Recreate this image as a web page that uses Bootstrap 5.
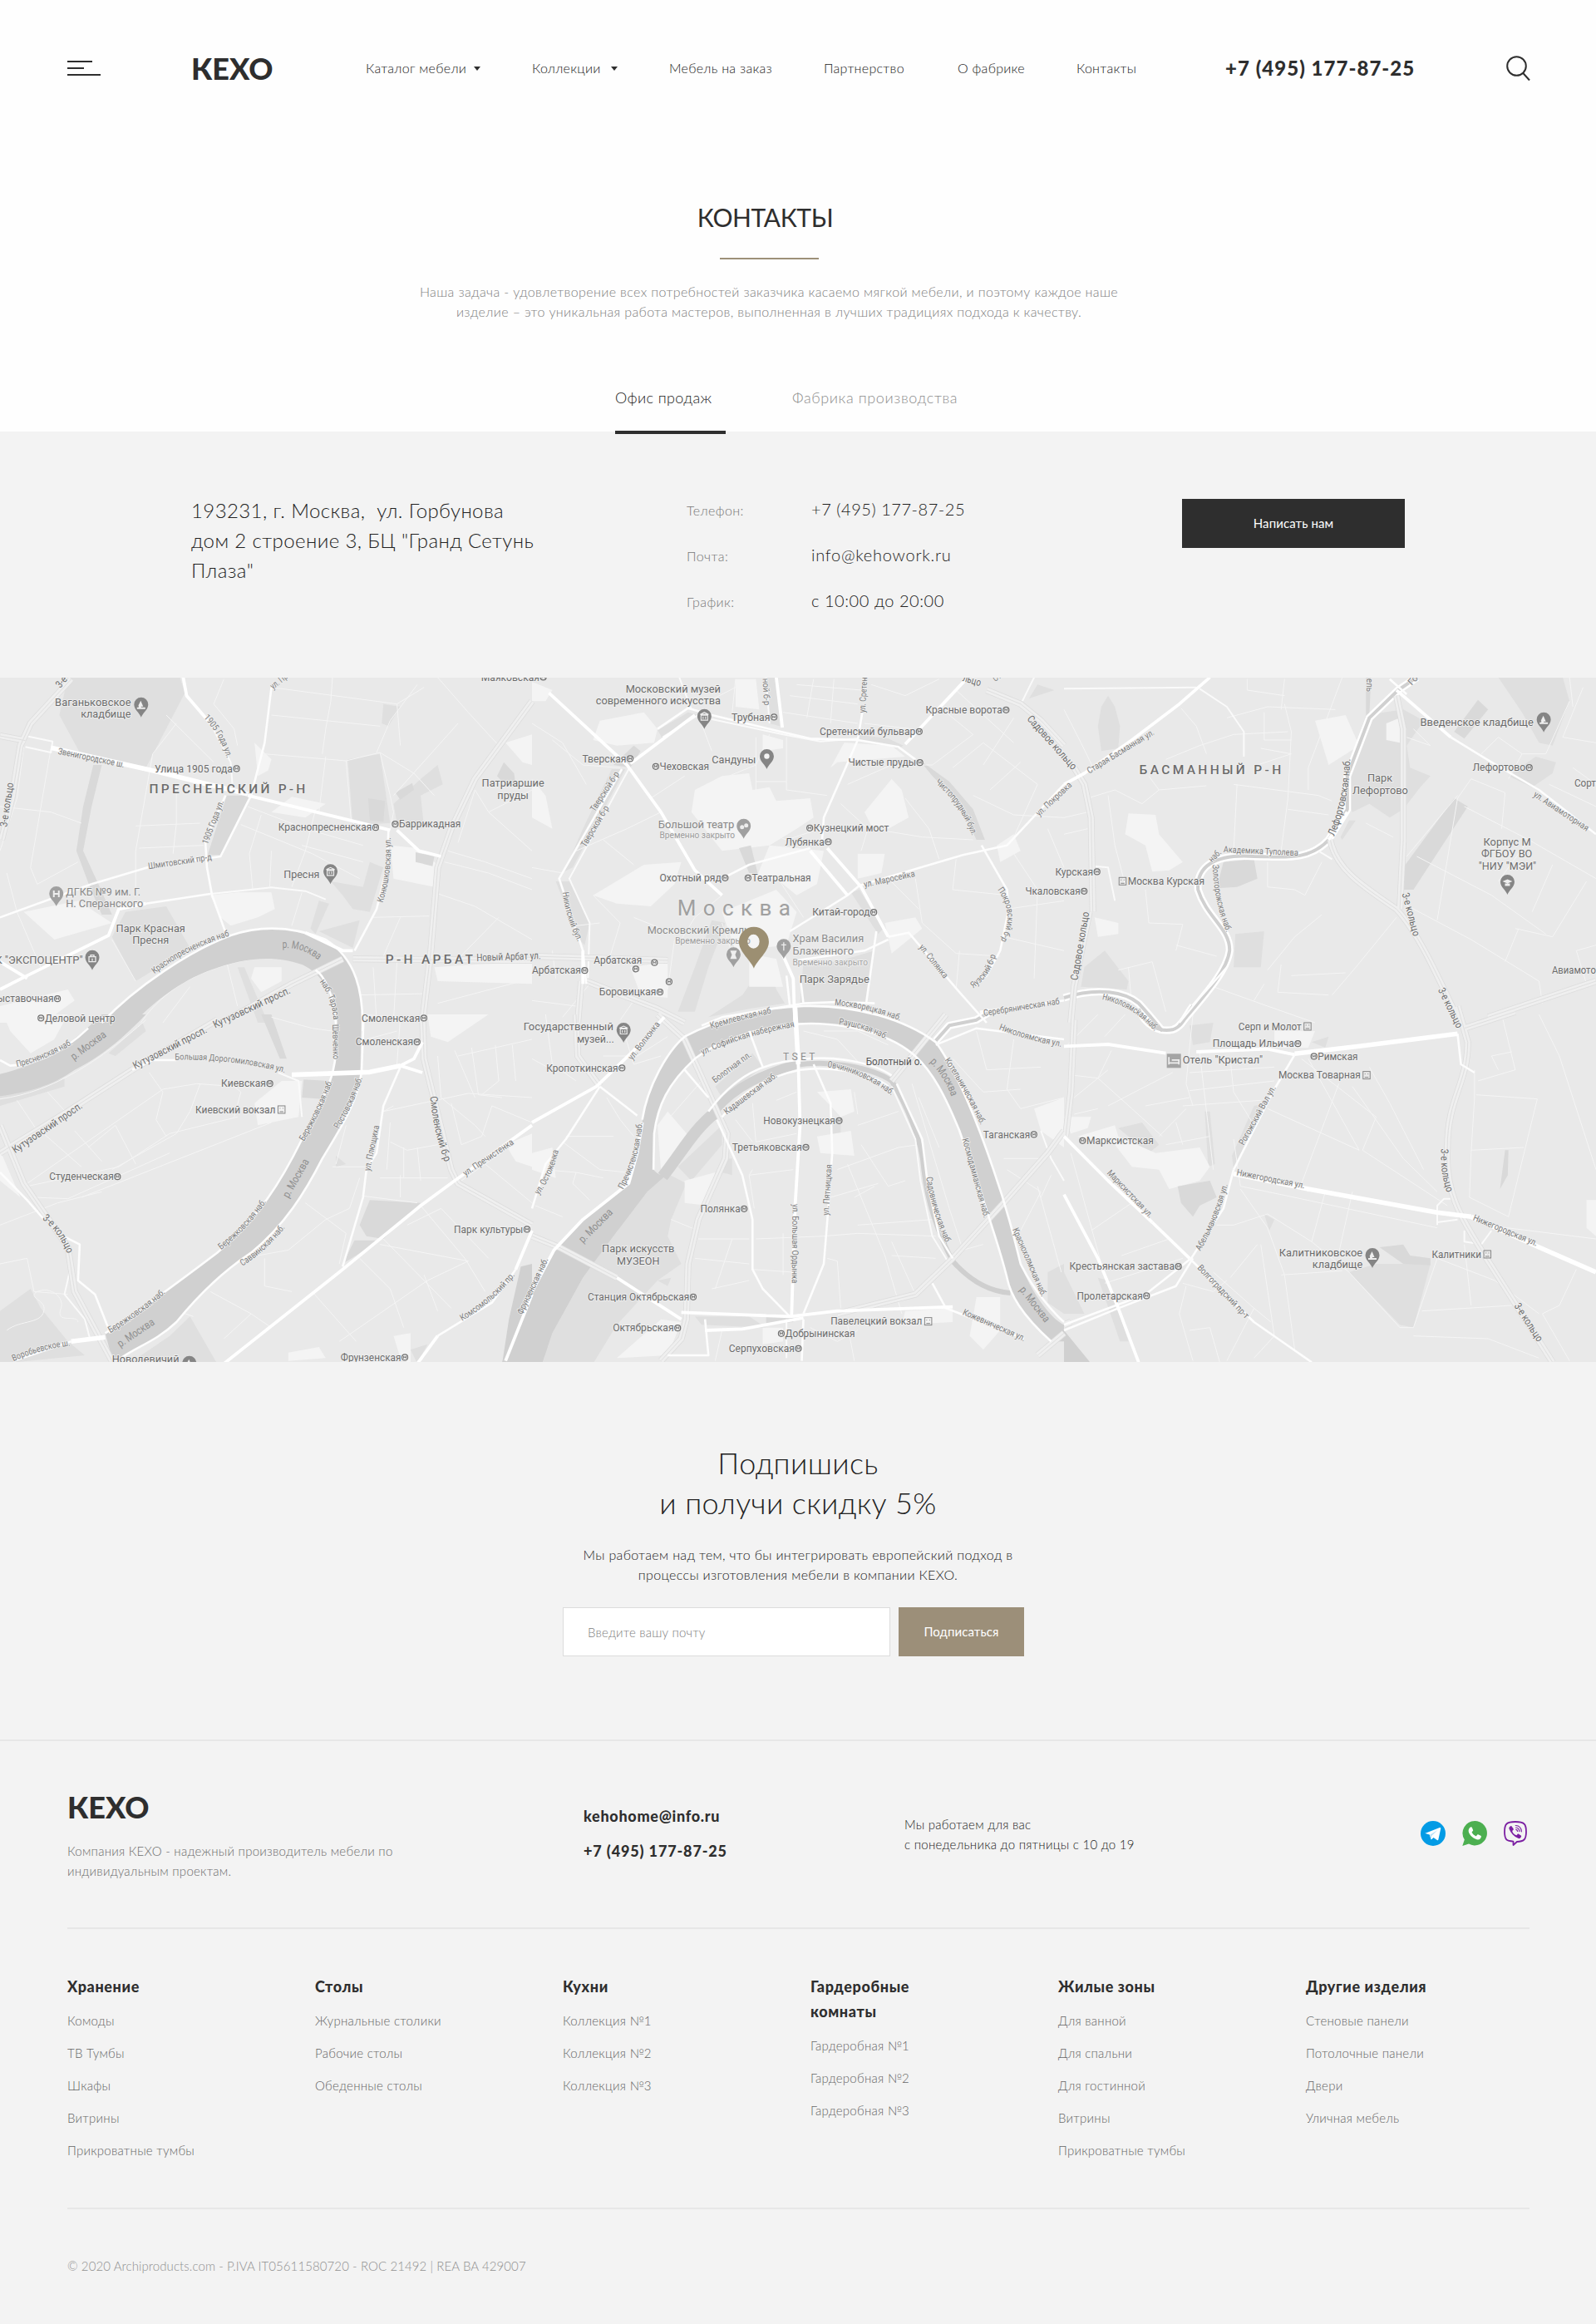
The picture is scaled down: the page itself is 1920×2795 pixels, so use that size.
<!DOCTYPE html>
<html lang="ru">
<head>
<meta charset="utf-8">
<meta name="viewport" content="width=device-width, initial-scale=1">
<title>Контакты — КЕХО</title>
<link href="https://cdn.jsdelivr.net/npm/bootstrap@5.3.0/dist/css/bootstrap.min.css" rel="stylesheet">
<style>
  body { font-family: Lato, "Open Sans", sans-serif; font-size: 16px; line-height: 24px; font-weight: 300; color: #222; background: #f3f3f3; }
  a { color: inherit; text-decoration: none; }
  h1, h2, h3, p, ul { margin: 0; }
  .top-area { background: #fefefe; }
  .site-head { height: 164px; padding-left: 81px; grid-template-columns: 150px 209px 200px 165px 186px 161px 143px 179px 338px 32px; letter-spacing: .28px; }
  .site-head > * { white-space: nowrap; }
  .brand { font-size: 36px; line-height: 48px; font-weight: 900; letter-spacing: -.1px; color: #2e2e2e; margin-left: -1px; }
  .burger { width: 40px; height: 18px; display: block; }
  .burger i { display: block; height: 2px; margin-bottom: 6px; background: #2e2e2e; width: 30px; }
  .burger i:nth-child(2) { width: 20px; }
  .burger i:nth-child(3) { width: 40px; margin: 0; }
  .tri { display: inline-block; border: 4.5px solid transparent; border-top: 5px solid #2e2e2e; border-bottom: 0; margin-left: 9px; vertical-align: 3px; }
  .tri-far { margin-left: 12px; }
  .head-phone { font-size: 24px; font-weight: 900; letter-spacing: 1.03px; color: #2e2e2e; }
  .page-title { font-size: 30px; line-height: 40px; padding-top: 77px; letter-spacing: -.4px; margin-right: 79px; color: #2e2e2e; }
  .gold-line { width: 119px; height: 2px; background: #9c9078; margin: 29px 0 27px 866px; }
  .intro { color: #808080; letter-spacing: .37px; width: 1850px; }
  .tabs-row { padding: 79px 0 0 740px; gap: 80px; font-size: 18px; letter-spacing: .38px; margin-bottom: -3px; position: relative; z-index: 1; }
  .tabs-row a { width: 133px; padding-bottom: 28px; border-bottom: 4px solid transparent; white-space: nowrap; color: #8e8e8e; }
  .tabs-row a.on { color: #222; border-color: #2e2e2e; }
  .tabs-row a + a { letter-spacing: .6px; }
  .office { height: 296px; padding: 77px 0 0 231px; grid-template-columns: 595px 596px 268px; background: #f3f3f3; }
  .address { font-size: 24px; line-height: 36px; letter-spacing: .4px; width: 440px; margin-left: -1px; }
  .line-row { height: 55px; line-height: 30px; padding-top: 1px; }
  .line-row dt { width: 150px; font-weight: 300; color: #777; letter-spacing: .42px; }
  .line-row dd { font-size: 20px; margin: 0; letter-spacing: .55px; }
  .line-row dd.mail { letter-spacing: .75px; }
  .btn-flat { border: 0; border-radius: 0; font-size: 15px; color: #fff; letter-spacing: .1px; height: 59px; padding: 0; }
  .btn-flat.ink { background: #2e2e2e; margin-top: 4px; }
  .btn-flat.sand { background: #9c8f79; width: 151px; }
  .city-map { display: block; width: 1920px; height: 823px; background: #e9e9e9; }
  .subscribe { padding-top: 97px; height: 456px; border-bottom: 2px solid #e7e7e7; }
  .subscribe h2 { font-size: 36px; line-height: 48px; font-weight: 300; letter-spacing: .35px; margin-bottom: 27px; }
  .subscribe p { letter-spacing: .34px; margin-bottom: 27px; }
  .subscribe form { gap: 10px; margin-left: 677px; }
  .mail-input { width: 394px; height: 59px; border: 1px solid #dcdcdc; border-radius: 0; font-size: 15px; font-weight: 300; padding: 0 29px; letter-spacing: .18px; }
  .mail-input::placeholder { color: #808080; }
  .site-foot { margin: 0 80px 0 81px; }
  .foot-top { height: 226px; padding-top: 55px; grid-template-columns: 621px 386px 621px 131px; border-bottom: 2px solid #e7e7e7; }
  .foot-top .brand { margin-left: 0; }
  .foot-top .about, .foot-list a, .hours { font-size: 15px; letter-spacing: .26px; }
  .foot-top .about { color: #6c6c6c; margin-top: 17px; }
  .direct { font-size: 18px; font-weight: 900; line-height: 30px; padding-top: 20px; letter-spacing: .7px; color: #2e2e2e; }
  .direct a { display: block; margin-bottom: 12px; }
  .direct a + a { letter-spacing: .87px; }
  .hours { padding-top: 33px; }
  .social { padding-top: 41px; gap: 20px; }
  .foot-cols { height: 337px; padding-top: 54px; grid-template-columns: repeat(6, 298px); border-bottom: 2px solid #e7e7e7; }
  .foot-cols h3 { font-size: 18px; line-height: 30px; font-weight: 900; letter-spacing: .62px; margin-bottom: 7px; color: #2e2e2e; }
  .foot-list a { color: #666; line-height: 39px; display: block; }
  .copy { color: #909090; font-size: 15px; padding: 56px 0 58px; letter-spacing: .09px; }
</style>
<script src="https://cdn.jsdelivr.net/npm/bootstrap@5.3.0/dist/js/bootstrap.bundle.min.js"></script>
</head>
<body>
<div class="top-area">
  <header class="site-head d-grid align-items-center">
    <a href="#" class="burger"><i></i><i></i><i></i></a>
    <a href="#" class="brand">КЕХО</a>
    <a href="#">Каталог мебели<span class="tri"></span></a>
    <a href="#">Коллекции<span class="tri tri-far"></span></a>
    <a href="#">Мебель на заказ</a>
    <a href="#">Партнерство</a>
    <a href="#">О фабрике</a>
    <a href="#">Контакты</a>
    <a href="#" class="head-phone">+7 (495) 177-87-25</a>
    <svg width="30" height="31" viewBox="0 0 30 31" fill="none" stroke="#2e2e2e" stroke-width="2"><circle cx="12.5" cy="12.5" r="11.3"/><path d="M20.3 21 28 29.5"/></svg>
  </header>
  <h1 class="page-title text-center fw-normal">КОНТАКТЫ</h1>
  <div class="gold-line"></div>
  <p class="intro text-center">Наша задача - удовлетворение всех потребностей заказчика касаемо мягкой мебели, и поэтому каждое наше<br>изделие – это уникальная работа мастеров, выполненная в лучших традициях подхода к качеству.</p>
  <nav class="tabs-row d-flex"><a href="#" class="on">Офис продаж</a><a href="#">Фабрика производства</a></nav>
</div>

<section class="office d-grid">
  <p class="address">193231, г. Москва,&nbsp; ул. Горбунова<br>дом 2 строение 3, БЦ "Гранд Сетунь<br>Плаза"</p>
  <dl class="m-0">
    <div class="line-row d-flex align-items-baseline"><dt>Телефон:</dt><dd>+7 (495) 177-87-25</dd></div>
    <div class="line-row d-flex align-items-baseline"><dt>Почта:</dt><dd class="mail">info@kehowork.ru</dd></div>
    <div class="line-row d-flex align-items-baseline"><dt>График:</dt><dd>с 10:00 до 20:00</dd></div>
  </dl>
  <button class="btn btn-flat ink">Написать нам</button>
</section>

<svg class="city-map" id="map" viewBox="0 815 1920 823" font-family="Roboto, sans-serif" font-weight="400"></svg>

<section class="subscribe">
  <h2 class="text-center">Подпишись<br>и получи скидку 5%</h2>
  <p class="text-center">Мы работаем над тем, что бы интегрировать европейский подход в<br>процессы изготовления мебели в компании КЕХО.</p>
  <form class="d-flex">
    <input class="form-control mail-input" placeholder="Введите вашу почту">
    <button type="button" class="btn btn-flat sand">Подписаться</button>
  </form>
</section>

<footer class="site-foot">
  <div class="foot-top d-grid">
    <div><a href="#" class="brand d-block">КЕХО</a><p class="about">Компания КЕХО - надежный производитель мебели по<br>индивидуальным проектам.</p></div>
    <div class="direct"><a href="#">kehohome@info.ru</a><a href="#">+7 (495) 177-87-25</a></div>
    <p class="hours">Мы работаем для вас<br>с понедельника до пятницы с 10 до 19</p>
    <div class="social d-flex align-items-start">
      <svg width="30" height="30" viewBox="0 0 30 30"><circle cx="15" cy="15" r="15" fill="#039be5"/><path fill="#fff" d="M5.8 14.7 22.9 8c.9-.3 1.5.2 1.3 1.3l-2.8 13c-.2 1-.8 1.2-1.6.8l-4.3-3.2-2.1 2c-.4.4-.8.5-1 .1l-.2-.8-1.400-4.600-4.900-1.500c-.7-.2-.7-.2-.1-.4z"/><path fill="#b9e1f7" d="m11.200 16.800 9.500-6-7.500 7.200-.6 4.200z"/></svg>
      <svg width="30" height="30" viewBox="0 0 30 30"><path fill="#4caf50" d="M15.300 0A14.700 14.700 0 1 1 8 27.500L.3 30l2.500-7.500A14.700 14.700 0 0 1 15.300 0z"/><path fill="#fff" d="M10.800 7.200c.5 0 .8.1 1.100.8l1.200 2.900c.2.5 0 .8-.3 1.200l-1 1.200c-.2.3-.2.5 0 .8 1 1.800 2.500 3.200 4.500 4.100.4.200.6.1.8-.1l1.200-1.500c.3-.4.600-.4 1-.3l3 1.500c.4.2.6.3.6.7 0 2.400-1.600 3.900-3.900 4-1.800 0-4.600-1.200-6.600-2.900-2.400-2-4.700-5.100-4.800-7.700 0-2 1.200-4.400 3.200-4.700z"/></svg>
      <svg width="28" height="30" viewBox="0 0 28 30" fill="none" stroke="#7b1fa2" stroke-width="1.800" stroke-linejoin="round" stroke-linecap="round"><path d="M14 1c5.500 0 8.800.8 10.500 2.500C26.300 5.200 27 8.200 27 13s-.7 7.800-2.500 9.500c-1.600 1.500-4.700 2.400-8.600 2.500L11.500 29v-4.300c-3.700-.4-6.600-1-8-2.200C1.700 20.800 1 17.800 1 13s.7-7.800 2.500-9.500C5.200 1.800 8.500 1 14 1z"/><path fill="#7b1fa2" stroke="none" d="M8.300 6.200c.5-.2.9-.2 1.300.3l2 2.800c.4.6.3 1.100-.2 1.600l-.8.700c-.4.4-.4.8-.2 1.200.8 2 2.200 3.500 4.200 4.300.5.200.8.100 1.100-.2l.8-1c.400-.5 1-.6 1.500-.2l2.700 1.900c.5.4.6.8.3 1.300-.7 1.400-1.900 2.700-3.200 2.100C12 18.400 8.400 14.500 6.500 9.400c-.5-1.400.6-2.600 1.800-3.200z"/><path stroke-width="1.200" d="M14.300 5.500c4.200.2 6.800 2.800 7 7.300M14.600 8c2.600.2 4.100 1.900 4.200 4.600M14.800 10.300c1.100.1 1.700.9 1.800 2.100"/></svg>
    </div>
  </div>
  <div class="foot-cols d-grid">
    <div class="foot-list"><h3>Хранение</h3><a href="#">Комоды</a><a href="#">ТВ Тумбы</a><a href="#">Шкафы</a><a href="#">Витрины</a><a href="#">Прикроватные тумбы</a></div>
    <div class="foot-list"><h3>Столы</h3><a href="#">Журнальные столики</a><a href="#">Рабочие столы</a><a href="#">Обеденные столы</a></div>
    <div class="foot-list"><h3>Кухни</h3><a href="#">Коллекция №1</a><a href="#">Коллекция №2</a><a href="#">Коллекция №3</a></div>
    <div class="foot-list"><h3>Гардеробные<br>комнаты</h3><a href="#">Гардеробная №1</a><a href="#">Гардеробная №2</a><a href="#">Гардеробная №3</a></div>
    <div class="foot-list"><h3>Жилые зоны</h3><a href="#">Для ванной</a><a href="#">Для спальни</a><a href="#">Для гостинной</a><a href="#">Витрины</a><a href="#">Прикроватные тумбы</a></div>
    <div class="foot-list"><h3>Другие изделия</h3><a href="#">Стеновые панели</a><a href="#">Потолочные панели</a><a href="#">Двери</a><a href="#">Уличная мебель</a></div>
  </div>
  <p class="copy">© 2020 Archiproducts.com - P.IVA IT05611580720 - ROC 21492 | REA BA 429007</p>
</footer>

<script>
// The map is split in a 3×2 grid of sheets; each sheet has its own 1568×1260 coordinate space.
const SX = 640 / 1568, SY = 1 / 3;
const ORIGIN = [[0, 810], [640, 810], [1280, 810], [0, 1220], [640, 1220], [1280, 1220]];
const px = (s, x) => ORIGIN[s][0] + x * SX, py = (s, y) => ORIGIN[s][1] + y * SY;

// p park, l built-up area, q pond, r river, c canal, 1–5 street width, h highway, y narrow river with banks
const SHEETS = [`
p 200,14 530,14 545,70 430,340 235,285 175,150
q 275,330 300,330 270,480 245,640 290,760 330,870 300,870 265,770 225,640 245,480
q 668,440 738,440 655,655 612,655
p 370,860 490,840 560,990 400,1110 330,950
p 1025,310 1120,290 1150,540 1040,545
q 1085,450 1135,460 1130,535 1090,530
q 1165,430 1215,395 1220,420 1180,455
q 1225,645 1280,660 1275,695 1225,680
p 1240,380 1290,330 1305,400 1240,440 1250,560 1170,540 1160,470
p 975,750 1070,770 1090,680 1130,700 1090,860 1040,850 1010,800
p 940,820 970,830 930,940 915,920
p 1130,110 1180,120 1145,190 1125,180
q 1485,320 1515,360 1520,400 1480,390 1465,370
p 700,1060 720,1060 790,1260 760,1260
p 940,930 1060,890 1040,990 990,960
l 1490,250 1568,220 1568,330 1540,320
l 620,800 700,790 800,790 810,850 760,880 680,910 650,880
l 1150,620 1230,630 1290,690 1280,770 1160,740
l 750,1060 830,1060 830,1110 770,1150 740,1100
l 1280,1060 1400,1050 1568,1040 1568,1120 1290,1110
l 0,1200 200,1140 220,1180 130,1260 0,1260
l 800,500 860,445 960,470 900,520
l 750,250 800,310 790,350 760,370
l 70,860 230,820 330,900 160,960
r M300,1260 C400,1130 560,1000 680,945 C800,895 900,930 960,960 C1050,1030 1072,1150 1068,1290 L990,1290 C985,1150 950,1085 890,1050 C800,1010 700,1030 600,1080 C520,1120 440,1200 395,1260Z
3 M300,1260 C400,1130 560,1000 680,945 C800,895 900,930 960,960 C1050,1030 1072,1150 1068,1290
3 M990,1260 C985,1150 950,1085 930,1070
1 M890,1040 C800,1010 700,1030 600,1080 C520,1120 460,1180 415,1260
h M0,225 L75,242
2 75,225 155,245 150,285 75,265
5 150,268 450,350 730,435
4 730,440 1000,520 1150,565
4 1170,565 1235,640 1300,660
4 540,14 550,80 620,180
2 620,180 680,320 685,400
3 800,50 780,250 740,440 650,660 435,700 270,760
3 270,760 0,880
3 665,440 605,600 610,700 625,800 665,935
4 0,1140 80,1090 320,945 350,850 430,830
3 430,830 620,795
4 0,1040 80,1100
2 620,795 800,772 900,785 960,815
3 1145,565 1140,700 1110,850 1045,1000
4 900,935 1010,1000 1040,1000
h 210,20 90,180 60,260 35,450 5,600
h 1568,100 1400,380 1330,560 1290,700 1270,1000 1245,1260
h 1010,1030 860,1120 640,1270
h 1040,1030 1568,1035
1 70,265 50,450 0,640
1 150,270 90,700 110,760 230,680
1 0,480 150,500 240,540
1 520,180 450,290 400,640 400,800
1 520,400 520,540 510,650
1 400,550 590,540
1 410,630 600,620
1 490,150 630,320
1 20,720 50,860 120,1060
1 660,20 630,110 690,200 700,260
1 980,14 975,100 960,200 950,290
1 800,150 1120,190
1 800,50 1170,110 1180,260
1 1230,40 1150,170 1110,285
1 780,290 1020,315 1120,285
1 1120,285 1150,440 1160,500 1150,565
1 1020,315 1035,530 1045,545
1 730,480 900,560 1070,620
1 710,545 920,650 1060,740
1 930,490 900,640 860,770
1 960,300 940,500
1 770,510 735,650 745,780
1 800,640 795,770
1 890,620 1070,680
1 1290,14 1380,140 1470,260
1 1170,110 1250,50
1 1120,285 1220,360 1280,440
1 1160,440 1350,180
1 1400,420 1440,500 1568,640
1 1400,420 1350,610
1 1320,640 1430,680 1568,740
1 1310,680 1440,720 1568,780
1 1440,500 1568,420
1 1095,880 1265,875
1 1280,790 1400,840 1568,960
1 1470,880 1350,1030
1 1180,880 1130,1020
1 1060,1160 1260,1155
1 1170,1040 1160,1250
1 1100,1060 1110,1250
1 890,790 860,910
1 330,960 400,1110
1 670,1050 700,1200
1 560,1130 480,1260
1 1568,1100 1290,1190`,
`
l 0,30 60,60 40,100 0,100
l 180,240 200,170 330,140 370,200 360,250 250,260
l 480,420 560,370 640,360 650,420 700,410 720,460 820,450 830,520 780,560 700,620 560,640 470,500
l 980,500 1060,380 1090,420 1110,520 1050,560 1000,550
l 700,620 860,640 840,760 780,800 720,740 660,740
l 180,800 330,690 440,680 420,760 350,840 250,830
l 290,1060 400,1040 400,1170 320,1160
l 560,860 720,780 780,860 750,980 600,1000
l 1040,900 1130,880 1150,920 1060,1010
l 960,650 1040,650 1030,720 960,740
l 1370,620 1420,580 1440,640 1380,680
l 600,20 660,20 670,130 600,120
l 880,340 920,250 1060,260 1100,300 900,320
l 0,380 40,440 60,560 0,520
l 680,220 740,240 740,270 680,280
p 370,205 460,140 490,150 385,235
q 240,330 300,260 320,280 290,340
p 235,345 275,345 120,700 95,715 150,560
p 955,220 1050,235 1095,260 1080,270 960,240
q 1140,310 1230,390 1300,490 1335,600 1310,600 1260,470 1180,370
q 610,630 645,620 665,720 640,720
p 940,790 965,780 1035,920 1020,940
p 690,14 725,14 730,190 700,180
p 430,1220 480,1060 530,890 570,900 520,1060 480,1220
p 520,1240 620,1160 660,1090 700,1060 720,1140 745,1190 640,1210
p 800,1040 900,1040 1010,1000 985,1185 790,1190
p 1465,90 1490,40 1540,60
p 70,750 110,750 170,900 155,980 140,960
l 640,1010 720,1030 740,1130 640,1130
4 50,70 280,330 380,500 480,710 560,800
3 265,345 80,740 150,1000 160,1120
2 285,345 110,740 170,900 165,1100
4 290,325 480,150
3 370,200 460,125 530,150 700,200 820,235 960,240 1080,265 1130,310
2 530,165 740,220 850,245 960,235
2 385,230 490,150
4 1130,300 C1240,400 1320,500 1335,600
3 1325,620 1400,780 1405,850 1380,1000 1340,1090 1300,1130
4 720,14 738,195
2 690,14 700,180
3 975,130 960,240 860,520 855,600
4 1280,20 1100,255
3 560,740 640,690 820,630
4 820,640 930,800
4 870,630 970,770 1050,950
3 760,930 930,800 965,765 1270,655 1400,620 1568,400
3 1050,950 1110,935 1260,1150 1340,1260
4 730,990 770,1100 775,1270
3 750,1090 760,1200
3 790,1090 800,1190
3 780,1035 980,1000 1050,960
3 1015,930 985,1190
h 0,1020 400,1035
h 145,1110 135,1260
h 160,1110 370,1210 450,1260
4 150,1000 150,1120
3 1320,1220 1568,1180
3 500,1270 560,1240 800,1190 900,1185 1010,1190
2 430,0 470,130
h 1340,60 1440,110 1500,170 1568,260
2 1480,14 1445,100
1 470,130 410,40
1 60,240 150,330 260,340
1 0,180 90,250 160,400
1 380,500 280,560 130,640
1 210,600 300,690
1 450,370 350,450
1 490,150 530,280
1 660,230 660,600
1 750,230 750,420 870,440
1 660,390 750,390
1 700,220 660,330 560,380
1 740,140 960,180
1 760,80 960,110
1 780,40 970,60
1 830,20 810,160
1 890,20 880,180
1 600,50 520,100
1 600,20 590,140
1 1000,40 1100,80 1200,20
1 980,180 1120,200
1 1200,120 1300,220 1180,330
1 1250,60 1420,250
1 1420,160 1330,330
1 1240,340 1330,250 1490,400
1 1350,420 1440,320
1 1300,440 1420,510 1568,520
1 1490,400 1420,590
1 1000,560 1150,590 1300,600
1 1100,450 1170,560 1200,670
1 930,400 1060,330 1180,330
1 910,470 990,560 970,640
1 1130,740 1150,900 1250,1010 1380,1020
1 1250,670 1240,780 1400,800
1 1050,740 1140,850
1 1400,850 1568,820
1 1390,950 1568,1000
1 1260,1000 1250,1140
1 1420,650 1490,780 1480,1100
1 1520,560 1568,700
1 0,700 90,720
1 180,800 260,900 230,1020
1 60,1000 70,1100
1 200,900 130,910
1 440,960 480,880 560,800
1 420,960 400,1140
1 300,880 420,940
1 560,900 600,1050
1 600,870 640,960
1 720,730 800,880
1 170,1120 90,1240
1 0,1180 130,1200
1 300,1180 260,1250
1 850,560 750,600 660,560`,
`
l 190,505 270,510 280,580 350,680 310,710 260,715 240,620 180,580
l 90,880 160,900 160,940 100,950
l 740,170 830,150 870,260 780,330
p 110,120 130,80 150,120 165,190 160,270 110,280 100,190
p 890,150 1000,130 1060,170 1010,260 1020,340 1080,370 1050,410 1000,490 960,520 900,470 850,500 820,420 850,290
l 950,180 990,160 990,250 950,240
q 890,14 905,14 900,150 890,150
q 1220,95 1250,130 1180,235 1150,210
p 1280,14 1470,14 1490,100 1440,260 1400,250 1350,140
q 1150,450 1190,480 1030,780 1000,780 1000,700
p 1310,370 1390,300 1450,320 1440,360 1380,410
q 470,680 560,670 570,740 510,770 450,775
p 505,940 590,930 580,1060 500,1060
p 60,1060 120,1000 190,1110 185,1140 50,1130
p 860,530 820,600 815,590 840,530
y M1040,14 L985,60 L900,160 L835,370 L835,490 L780,600 C720,680 640,660 560,660 C440,650 390,700 395,780 C420,880 490,920 488,1000 C480,1080 400,1180 340,1270
y M0,1170 C100,1130 180,1150 220,1190 C250,1230 270,1260 290,1290
4 0,400 60,360 200,240 340,110 430,14
2 0,55 390,50
2 400,55 480,120 530,210 530,300
h 30,340 60,400 80,520 85,860
h 75,860 30,1130 20,1260
4 980,60 1140,230
3 1140,230 1260,320 1400,420 1568,580
3 960,20 1010,75
h M785,600 C800,700 870,760 980,850 C1040,930 1090,1060 1170,1270
h 980,80 1000,200 1000,600 990,850
h 1568,1110 1250,1240
4 835,500 780,600
2 90,695 130,700 150,820
3 340,1260 400,1170 480,1060
2 750,640 790,670
1 0,130 50,250 90,350
1 70,450 150,420 230,470 280,420 420,405
1 250,370 280,420
1 500,400 750,440 790,460
1 510,400 500,640
1 480,160 600,120 800,130
1 345,125 390,190 420,290
1 300,310 400,260 500,220 660,210
1 590,140 590,240 670,240
1 580,270 670,290 570,330
1 650,110 670,210 660,450 640,640
1 650,20 640,130
1 540,20 540,60 650,80
1 820,14 720,340 720,420
1 660,490 780,510
1 130,440 150,620 180,760
1 600,680 600,770 680,780 710,800 760,680
1 330,770 400,760
1 240,780 250,900 350,905 330,1000
1 330,980 450,1020
1 600,1070 680,950 760,870
1 980,880 860,1060 790,1160
1 640,1050 630,1150 780,1160
1 670,1090 830,1080
1 160,1070 260,1040 300,1220
1 190,1060 200,1200
1 440,1130 600,1200 740,1260
1 560,1180 590,1120
1 1010,660 1160,440
1 1200,380 1160,450 1100,890
1 1040,660 1260,800 1420,940
1 1180,480 1370,600 1568,740
1 1200,380 1300,430 1290,560
1 1000,830 1200,960 1400,1110
1 1370,600 1280,750
1 1440,690 1380,860
1 1540,750 1440,950 1330,920
1 1340,920 1300,1040
1 1400,1110 1410,1190
1 1568,980 1510,1000 1540,1120
1 1430,400 1568,480
1 1490,100 1420,290 1350,290
1 1230,290 1280,230 1350,290 1310,380
1 1490,14 1500,120
1 1530,50 1470,230 1568,250
1 1010,230 1080,260 1030,200
1 1500,340 1568,400
1 890,540 970,590
1 0,520 70,500
1 0,580 70,560`,
`
q 895,235 970,240 950,305 890,300
p 320,140 420,30 430,60 340,150
q 770,0 800,0 845,160 825,160
q 1090,670 1240,680 1130,810 1080,800 1060,760
q 1045,815 1120,815 1010,900
p 0,1070 90,990 120,1060 200,1180 250,1230 0,1260
p 560,1090 640,1260 380,1260 500,1160
p 0,290 190,230 190,260 0,330
p 990,510 1020,540 990,550
p 1210,1210 1260,1190 1230,1260
l 750,320 830,240 890,240 880,370 760,400
l 10,0 200,0 160,90 90,140 30,60
l 1260,0 1440,0 1320,100 1270,80
l 1160,1160 1210,1150 1210,1260 1180,1240
l 0,490 60,660 0,600
l 850,1220 940,1200 960,1240 850,1250
l 1490,470 1568,430 1568,550 1520,530
r M0,215 C120,180 200,120 300,0 L430,0 C360,90 300,150 220,200 C150,260 80,280 0,295Z
r M990,0 L1065,0 L1062,200 C1060,300 1010,400 950,520 C900,640 840,760 740,860 C640,940 560,1050 520,1110 C460,1180 400,1200 360,1240 L330,1240 310,1150 C400,1080 500,990 640,860 C760,740 830,600 890,450 C940,330 995,230 990,100Z
r 1568,900 1535,910 1500,1100 1480,1260 1568,1260
3 M0,165 L30,185 C120,180 200,120 260,50
1 M0,305 C160,280 300,160 430,20
3 M990,0 L990,100 C995,230 940,330 890,450 C830,600 760,740 640,860 C500,990 400,1080 310,1150
3 M1072,0 L1066,200 C1060,300 1010,400 950,520 C900,640 840,760 740,860 C640,940 560,1050 520,1110 C460,1180 400,1200 350,1245
3 390,200 450,165 520,165
5 860,218 1090,208 1180,185
4 1180,185 1220,160 1245,100
4 1180,185 1245,210
2 820,210 880,240 890,370
h 0,500 200,350 390,200 640,20
h 0,400 70,610 200,840 220,1000 330,1250
3 170,790 235,830 230,960 280,1010 325,1150
3 0,570 80,670 130,740
2 205,930 190,1010 250,1100 265,1170
5 210,1180 310,1165
3 40,1250 210,1180
1 M20,1140 C60,1100 130,1120 130,1060 C130,1030 80,1020 110,1000 C150,980 190,1020 180,1060 C160,1120 230,1080 230,1110
3 1180,190 1130,330 1110,500 1080,560 1070,660 1010,910
4 1568,400 1340,600 1240,690 1000,930 660,1260
h 1245,0 1250,160 1330,560 1350,610 1568,760
4 1568,780 1520,920
3 1520,920 1450,1040 1290,1160
4 1290,1160 1230,1260
4 1568,1010 1490,1250
1 440,210 480,280 460,380 490,440
1 480,270 580,250 690,260 710,280 690,370
1 590,250 560,350 520,430 330,560
1 700,370 500,430 350,550 80,620
1 80,610 480,270
1 50,310 110,420
1 110,410 240,550
1 220,420 300,530
1 260,480 340,400 400,540
1 140,280 200,360
1 100,660 200,665 500,500
1 240,660 800,390
1 1130,350 1380,285 1568,300
1 1130,350 1160,330
1 1150,460 1200,490 1290,470
1 1150,390 1140,560
1 1190,480 1190,590
1 1230,480 1240,600
1 1120,590 1320,590
1 1070,655 1230,680
1 1180,580 1180,660
1 1290,150 1300,300 1400,400 1430,440
1 1340,130 1400,300
1 1390,120 1410,290 1480,300
1 1460,110 1470,240 1420,290
1 1350,150 1568,90
1 1330,320 1360,470 1420,440 1450,330 1568,390
1 1510,110 1520,240
1 1360,600 1500,480
1 1430,540 1568,680
1 1060,0 1180,10 1170,180
1 1080,90 1170,60
1 1240,690 1370,880 1430,1000
1 1130,810 1330,1060
1 1120,830 1380,890 1260,960 1000,1180
1 1200,760 1300,700 1440,880
1 1060,880 1150,990 1190,1130
1 920,1000 1050,1180
1 1250,940 1290,1070
1 620,1000 740,1080 800,1130
1 740,1080 660,1170
1 900,680 1020,790 1000,900
1 960,740 850,850 760,870
1 1060,590 1030,700 960,740
1 980,550 1080,550
1 1020,400 990,540
1 780,880 780,980 860,1000
1 570,1090 500,1060
1 0,900 80,880 100,1000 200,1010
1 800,10 920,50 980,60
1 0,760 170,680 300,640`,
`
p 400,575 455,610 410,740 400,800 440,900 370,960 250,1120 180,1260 30,1260 60,1150 150,950 240,800 340,640
p 540,260 650,140 680,190 560,300
p 370,960 410,950 400,980
q 690,1080 770,1090 770,1110 690,1120
p 480,1090 640,1090 690,1130 500,1120
p 560,520 590,520 590,580 560,570
p 430,550 560,400 560,470 470,600
p 880,380 910,380 910,480 890,480
p 1520,930 1568,900 1568,1080 1520,1040
p 20,1200 60,1200 60,1260
l 370,400 400,350 470,450 430,540 380,560
l 450,600 540,570 520,690 450,680
l 840,280 940,270 950,350 910,370 880,330
l 840,440 940,420 950,510 850,500
l 1310,1020 1380,1020 1380,1140 1330,1210 1290,1160
l 1100,1070 1240,1060 1240,1110 1090,1120
l 380,1100 440,1110 400,1230 250,1240
l 1480,340 1568,300 1568,480 1500,420
l 0,500 60,480 70,590 0,560
l 680,1130 740,1130 740,1180 680,1190
r M325,390 C340,260 400,130 450,80 C560,10 680,-25 800,-30 C 960,-35 1100,20 1190,100 C1250,200 1310,380 1360,560 C1400,700 1420,800 1440,900 C1470,1000 1530,1100 1568,1120 L1568,1180 L1530,1180 C1440,1080 1410,1010 1400,950 C1370,800 1310,600 1260,420 C1220,300 1180,200 1120,140 C1040,60 900,25 780,35 C650,50 540,100 480,160 C400,250 370,330 360,430 L358,560 Q380,590 400,575 L340,640 240,800 150,950 60,1150 30,1260 -90,1260 -50,1150 0,1000 65,850 150,740 285,610 310,500Z
c M385,585 C440,500 480,410 540,355
C M540,345 C600,260 680,215 780,180
d M780,182 C880,165 1000,190 1060,240 C1100,320 1150,450 1155,560 C1165,680 1200,800 1240,890 C1290,960 1350,1000 1410,1005
3 M325,380 C340,260 400,130 450,80 C560,10 680,-25 800,-30 C 960,-35 1100,20 1190,100 C1250,200 1310,380 1360,560 C1400,700 1420,800 1440,900 C1480,1000 1540,1080 1568,1110
3 M1530,1180 C1440,1080 1410,1010 1400,950 C1370,800 1310,600 1260,420 C1220,300 1180,200 1120,140 C1040,60 900,25 780,35 C650,50 540,100 480,160 C400,250 370,330 360,430 L358,560
4 325,390 310,500 285,610 150,740 65,850 0,1000
3 M520,350 C600,220 680,175 780,165 C880,145 1000,170 1060,220
3 M560,370 C620,280 690,225 790,200 C880,185 1000,210 1050,260
5 775,-30 785,180
4 785,180 790,400 775,700 765,1090
3 830,180 880,320 885,500 870,750 860,900 800,1080
3 545,380 620,580 650,740 650,920 680,990 760,1090
3 640,60 680,190
h 370,0 450,90 520,280 575,430 570,520 490,740 460,900 455,1100 440,1170 380,1250
3 450,200 520,300
4 0,390 190,260 300,130 390,10
3 200,260 100,450 40,540 0,700
h 130,0 135,150 200,260
3 200,260 310,365
h 0,800 80,840 250,950
4 250,950 440,1100
4 440,1075 760,1090 900,1070 1240,1055
4 510,1140 620,1135 800,1095
3 400,1230 520,1230 510,1100
2 750,1100 750,1240
3 800,1100 795,1250
h 1220,0 1120,150 1060,240
h 1568,420 1520,500 1390,680 1240,880 1130,1010 900,1080
3 1075,250 1150,450 1165,600 1200,800 1240,880
2 1060,260 1130,450 1145,600 1180,800 1230,900
y 1190,95 1230,40 1310,20 1350,-10
3 1190,110 1310,50 1568,90
3 1180,970 1220,1060 1450,1170
h 1490,1230 1568,1150
2 1500,420 1530,520 1568,600
1 650,560 640,580 655,700
1 640,580 770,560
1 650,320 660,460 780,430
1 720,310 780,280
1 600,380 650,460
1 930,540 1040,870 1090,1080
1 900,560 1080,480 1140,470
1 880,660 1020,610
1 960,760 1180,740
1 950,660 1010,620
1 870,880 900,890 910,1060
1 490,810 640,810
1 660,810 860,800 960,790 1190,800
1 740,790 740,940
1 590,810 540,990
1 480,880 640,900
1 530,990 640,960
1 410,740 490,780
1 650,920 770,930
1 1060,820 1130,1010
1 960,400 1080,350
1 970,470 1050,620 1100,600
1 950,280 960,360
1 1120,250 1230,700 1270,850
1 1270,850 1330,830
1 1140,300 1200,480
1 1200,940 1240,880
1 800,60 900,90 960,170
1 860,60 960,60 1050,110
1 40,0 60,180 130,240
1 0,160 60,200
1 210,150 310,150 400,80
1 270,60 300,180 380,150
1 100,440 240,440
1 90,460 200,560 280,570
1 30,560 130,570 210,590
1 130,570 120,610 170,670
1 220,300 260,380 300,440
1 10,690 90,730
1 500,240 400,380
1 820,1130 900,1180 960,1140
1 560,1140 540,1250
1 930,1120 950,1250
1 1190,880 1060,870
1 1240,160 1330,280 1440,270
1 1310,60 1340,200 1500,190
1 1420,90 1400,270 1440,340 1568,300
1 1360,430 1480,440
1 1400,560 1500,640 1440,780
1 1390,520 1500,520
1 1490,620 1560,930
1 1530,580 1500,660`,
`
p 370,40 440,30 430,100 380,110
p 160,410 230,390 280,470 250,500
q 335,620 430,600 450,660 400,690 380,730 345,680
q 930,840 1000,830 1020,870 1080,880 1080,905 1000,900
p 840,930 920,900 1080,900 1030,1130 990,1120
p 0,930 60,1080 0,1080
q 1300,490 1310,490 1308,580 1285,630
p 560,330 600,320 500,560 495,510
p 415,350 430,350 445,540 425,550
p 590,720 620,740 605,780
p 100,950 130,960 190,1180 165,1180
p 730,100 780,80 770,120
r 0,1140 80,1260 0,1260
l 0,370 80,370 70,410 20,430
l 40,440 150,400 160,440 270,500 400,480 430,550 400,600 310,630 280,560 200,550 150,470
l 1540,670 1568,670 1568,800 1540,770
l 620,60 740,60 720,120 620,120
y M220,-20 C240,40 280,65 320,55 C350,45 360,0 380,-30
4 0,115 130,108 300,140
4 390,135 600,125 680,145
5 680,142 870,115 1160,70
h 30,20 20,280 5,440
4 0,440 130,600 260,750
4 260,750 370,880
3 370,880 560,1110 730,1255
3 680,145 620,270 500,560
3 500,560 470,700 375,880 240,1010 0,1120
3 0,1140 160,1060 330,980 380,880
5 500,575 720,630 1100,715 1200,730
5 1200,730 1400,840 1568,930
h M1160,-30 L1190,100 C1190,250 1130,300 1130,480 C1120,650 1180,750 1240,870 L1440,1255
3 1160,70 1170,180 1210,210
4 0,650 100,880 160,1060 220,1255
h 1180,50 1330,-10
h 0,1120 20,1110
2 1100,760 1100,690 1120,665 1140,665
2 1100,750 1160,740
2 1180,780 1180,820 1230,830 1260,780
1 1210,200 1210,300 1200,500 1195,660 1310,730
1 1215,290 1395,305 1310,730
1 1200,490 1355,480
1 1290,0 1330,200 1220,240
1 1260,150 1280,200
1 1260,150 1320,135
1 700,160 920,370 880,490 1130,690
1 720,160 870,490
1 600,340 870,490
1 810,250 700,610
1 500,450 520,620 640,650 1100,770
1 520,630 600,770 650,940 680,1210
1 730,820 840,930 990,1130 1030,1130 1100,880
1 600,720 730,820 770,640
1 850,640 810,860
1 600,720 500,760 450,760
1 440,930 560,1060 610,1110
1 570,830 490,950
1 580,830 620,1160 560,1240
1 350,880 120,970
1 20,500 110,900 160,910
1 80,780 200,680
1 170,870 310,810
1 100,0 10,110
1 30,220 100,230 200,340 290,440
1 100,230 140,130
1 130,330 240,260 320,210
1 370,210 620,190
1 370,275 620,240
1 350,330 580,310
1 380,0 370,120 360,250 380,330
1 400,140 440,560
1 490,160 500,280 560,400
1 300,470 430,440
1 330,390 350,470
1 240,330 370,300
1 280,440 360,340
1 180,0 120,80
1 30,300 130,200
1 350,970 440,1000 480,960
1 360,980 340,1080 380,1250
1 370,1140 430,1130 460,1260
1 640,940 820,925
1 1100,880 1270,960 1400,1080
1 1055,1070 1320,1050
1 1180,830 1200,1050
1 1510,920 1460,1050 1410,1080 1490,1250
1 900,190 960,320 1060,560
1 1030,1160 1250,1170 1400,1240
1 850,260 1000,520 1100,640
1 1240,760 1568,810
1 1400,0 1460,150 1568,560
1 480,1250 560,1060
1 700,620 720,640
1 30,360 100,340`];

const LOOK = {
  p: ['#dfdfdf'], q: ['#d9d9d9'], l: ['#f4f4f4'], r: ['#d0d0d0'],
  c: ['none', '#d0d0d0', 14], C: ['none', '#d0d0d0', 11], d: ['none', '#cfcfcf', 6],
  1: ['none', '#f5f5f5', 1], 2: ['none', '#fafafa', 2], 3: ['none', '#fdfdfd', 2.6], 4: ['none', '#fff', 3.8], 5: ['none', '#fff', 5.6],
  y: ['none', '#fff', 9], Y: ['none', '#d0d0d0', 4], h: ['none', '#dcdcdc', 8], H: ['none', '#efefef', 6.5], I: ['none', '#dfdfdf', 1]
};
const parsed = [];
SHEETS.forEach((txt, s) => txt.trim().split('\n').forEach(row => {
  const kind = row[0], d = row.slice(2).trim();
  const closed = 'pqlr'.includes(kind);
  parsed.push([s, kind, d[0] === 'M' ? d : 'M' + d.replace(/ /g, 'L') + (closed ? 'Z' : '')]);
}));
let out = '';
for (const layer of 'plq1rcCdyY2hHI345') {
  const source = { Y: 'y', H: 'h', I: 'h' }[layer] || layer;
  const [fill, stroke, w] = LOOK[layer];
  for (const [s, k, d] of parsed) if (k === source)
    out += `<path transform="translate(${ORIGIN[s]}) scale(${SX} ${SY})" d="${d}" fill="${fill}"` +
      (stroke ? ` stroke="${stroke}" stroke-width="${w}" vector-effect="non-scaling-stroke" stroke-linejoin="round"` : '') + '/>';
}

// Street names: sheet, start x,y, end x,y, name, bow (px), size, colour
const STREETS = [
  [0,170,290,365,340,'Звенигородское ш.'],[0,600,160,668,308,'1905 Года ул.',4],[0,612,618,660,462,'1905 Года ул.'],
  [0,438,706,625,672,'Шмитовский пр-д'],[0,1128,828,1150,590,'Конюшковская ул.',-4],[0,455,1084,678,948,'Краснопресненская наб',5],
  [0,832,990,940,1038,'р. Москва',5,13,'#8f8f8f'],[0,20,555,40,395,'3-е кольцо',0,12.5],[0,178,54,200,22,'3-е',0,12.5],[0,805,58,850,14,'ул. Пр'],
  [0,634,1280,858,1152,'Кутузовский просп.',0,12.5],[0,942,1112,982,1252,'наб. Тараса',4],[0,1405,1038,1594,1030,'Новый Арбат ул.',0,12.5],
  [1,185,500,258,362,'Тверской б-р'],[1,158,628,228,484,'Тверской б-р'],[1,90,790,136,968,'Никитский бул.',-3],
  [1,982,142,988,14,'ул. Сретен'],[1,680,18,684,116,'ной б-р'],[1,1188,395,1296,590,'Чистопрудный бул.',6],
  [1,1495,516,1593,405,'ул. Покровка'],[1,980,772,1130,732,'ул. Маросейка'],[1,1372,780,1372,975,'Покровский б-р',12],
  [1,1140,988,1215,1102,'ул. Солянка'],[1,1300,1136,1366,1012,'Яузский б-р',-5],[1,1332,1236,1556,1192,'Серебряническая наб'],
  [1,892,1196,1085,1254,'Москворецкая наб.',3],[1,1458,165,1593,350,'Садовое кольцо',0,12.5],[1,1268,26,1320,46,'льцо',0,12.5],
  [1,1365,30,1385,14,'Ст'],
  [2,75,362,268,218,'Старая Басманная ул.'],[2,796,588,842,306,'Лефортовская наб.',-5,12.5],[2,892,18,892,66,'ель'],
  [2,470,645,690,658,'Академика Туполева'],[2,436,682,465,648,'наб.'],[2,438,690,480,935,'Золоторожская наб.',-4],
  [2,996,795,1030,950,'3-е кольцо',0,12.5],[2,1102,1142,1158,1282,'3-е кольцо',0,12.5],[2,40,1108,74,862,'Садовое кольцо',0,12.5],[2,1382,442,1540,570,'ул. Авиамоторная'],
  [2,112,1176,268,1296,'Николоямская наб.',7],[2,1025,44,1045,18,'Го'],
  [3,50,190,215,105,'Пресненская наб.',-3],[3,218,166,315,78,'р. Москва',0,13,'#8f8f8f'],[3,398,198,612,64,'Кутузовский просп.',0,12.5],
  [3,516,164,840,212,'Большая Дорогомиловская ул.',5],[3,980,36,982,162,'Шевченко'],[3,45,502,245,336,'Кутузовский просп.',0,12.5],
  [3,896,458,980,240,'Бережковская наб.',-2],[3,998,414,1068,228,'Ростовская наб.',-2],[3,1090,566,1118,402,'ул. Плющиха'],
  [3,1268,296,1312,534,'Смоленский б-р',-3,12.5],[3,1372,584,1516,466,'ул. Пречистенка'],[3,850,664,912,530,'р. Москва',0,13,'#8f8f8f'],
  [3,652,850,785,675,'Бережковская наб.',-3],[3,715,908,840,768,'Саввинская наб.',-3],[3,124,738,198,866,'3-е кольцо',4,12.5],
  [3,325,1150,488,1004,'Бережковская наб.',-2],[3,355,1202,458,1116,'р. Москва',0,13,'#8f8f8f'],[3,40,1252,208,1196,'Воробьевское ш.',3],
  [3,1362,1106,1518,940,'Комсомольский пр.',-4],[3,1540,1084,1616,884,'Фрунзенская наб.'],
  [4,528,52,706,-4,'Кремлевская наб',1],[4,502,146,775,46,'ул. Софийская набережная',4],[4,904,36,1044,92,'Раушская наб.',3],[4,540,248,648,150,'Болотная пл.'],
  [4,870,190,1060,296,'Овчинниковская наб.',6],[4,574,362,724,224,'Кадашевская наб.'],[4,296,166,378,36,'ул. Волхонка'],[4,20,652,78,490,'ул. Остоженка',-3],
  [4,268,632,324,388,'Пречистенская наб.',-5],[4,150,826,240,716,'р. Москва',0,13,'#8f8f8f'],
  [4,768,684,766,970,'ул. Большая Ордынка'],[4,874,726,884,542,'ул. Пятницкая'],[4,1162,588,1222,830,'Садовническая наб.',-3],
  [4,1268,450,1332,735,'Космодамианская наб.'],[4,1215,166,1322,400,'Котельническая наб.',2],[4,1172,172,1236,298,'р. Москва',3,13,'#8f8f8f'],
  [4,1376,54,1560,116,'Николоямская ул.',-2],[4,1416,776,1502,1020,'Краснохолмская наб.'],[4,1436,994,1512,1114,'р. Москва',0,13,'#8f8f8f'],[4,1268,1082,1450,1180,'Кожевническая ул.'],
  [5,530,474,625,264,'Рогожский Вал ул.'],[5,508,580,708,628,'Нижегородская ул.'],[5,126,574,252,736,'Марксистская ул.'],[5,402,854,482,614,'Абельмановская ул.',-3],
  [5,392,916,535,1100,'Волгоградский пр-т'],[5,1112,484,1130,644,'3-е кольцо',-3,12.5],[5,1326,1052,1396,1184,'3-е кольцо',0,12.5],
  [5,1204,742,1392,836,'Нижегородская ул.']
];
STREETS.forEach(([s, x1, y1, x2, y2, name, bow = 0, size = 10.8, col = '#7c7c7c'], i) => {
  const a = px(s, x1), b = py(s, y1), c = px(s, x2), d = py(s, y2);
  const len = Math.hypot(c - a, d - b) || 1, mx = (a + c) / 2 + (d - b) / len * bow * 2, my = (b + d) / 2 - (c - a) / len * bow * 2;
  out += `<path id="st${i}" d="M${a} ${b}Q${mx} ${my} ${c + (c - a) * .03} ${d + (d - b) * .03}" fill="none"/>
    <text font-size="${size}" fill="${size === 12.5 ? '#6c6c6c' : col}" stroke="#efefef" stroke-width="${size === 13 ? 0 : 1.6}" paint-order="stroke" textLength="${len}" lengthAdjust="spacingAndGlyphs"><textPath href="#st${i}" textLength="${len}" lengthAdjust="spacingAndGlyphs">${name}</textPath></text>`;
});

// Places: sheet, left x, baseline y, width, name, marker side (l, r, t = train right, T = train left), size, colour
const PLACES = [
  [0,162,116,224,'Ваганьковское'],[0,238,158,148,'кладбище'],[0,456,356,230,'Улица 1905 года','r'],[0,440,432,460,'ПРЕСНЕНСКИЙ Р-Н','',15.5],
  [0,820,568,276,'Краснопресненская','r'],[0,1176,556,182,'Баррикадная','l'],[0,1420,408,184,'Патриаршие'],[0,1466,452,92,'пруды'],
  [0,836,738,106,'Пресня'],[0,194,800,220,'ДГКБ №9 им. Г.','',13,'#888'],[0,194,842,228,'Н. Сперанского','',13,'#888'],
  [0,342,932,204,'Парк Красная'],[0,390,976,108,'Пресня'],[0,-14,1048,258,'К "ЭКСПОЦЕНТР"'],[0,-26,1186,184,'Выставочная','r'],
  [0,132,1256,208,'Деловой центр','l'],[0,1066,1256,172,'Смоленская','r'],[0,1136,1046,258,'Р-Н АРБАТ','',15.5],[0,1418,26,172,'Маяковская','r'],
  [1,276,68,280,'Московский музей'],[1,188,112,368,'современного искусства'],[1,588,170,114,'Трубная','r'],[1,530,324,130,'Сандуны'],[1,148,320,130,'Тверская','r'],
  [1,376,348,146,'Чеховская','l'],[1,848,222,282,'Сретенский бульвар','r'],[1,1160,144,226,'Красные ворота','r'],[1,932,334,200,'Чистые пруды','r'],
  [1,372,558,224,'Большой театр','',13,'#888'],[1,376,594,222,'Временно закрыто','',10.5,'#9c9c9c'],[1,830,570,222,'Кузнецкий мост','l'],[1,746,620,116,'Лубянка','r'],
  [1,376,750,182,'Охотный ряд','r'],[1,648,750,174,'Театральная','l'],[1,428,872,334,'Москва','',26,'#a0a0a0'],[1,826,874,170,'Китай-город','r'],
  [1,340,938,302,'Московский Кремль','',13,'#8c8c8c'],[1,422,976,222,'Временно закрыто','',10.5,'#9c9c9c'],[1,768,970,210,'Храм Василия','',13,'#8c8c8c'],[1,768,1014,180,'Блаженного','',13,'#8c8c8c'],
  [1,768,1052,222,'Временно закрыто','',10.5,'#a4a4a4'],[1,788,1116,206,'Парк Зарядье'],[1,182,1046,142,'Арбатская'],[1,0,1084,144,'Арбатская','r'],[1,198,1162,168,'Боровицкая','r'],
  [1,1542,728,112,'Курская','r'],[1,1454,798,162,'Чкаловская','r'],
  [2,222,364,418,'БАСМАННЫЙ Р-Н','',15.5],[2,1050,190,334,'Введенское кладбище'],[2,1204,352,156,'Лефортово','r'],[2,1504,408,64,'Сорт'],
  [2,894,390,74,'Парк'],[2,850,434,164,'Лефортово'],[2,1236,620,140,'Корпус М'],[2,1230,664,150,'ФГБОУ ВО'],[2,1222,708,170,'"НИУ "МЭИ"'],
  [2,188,762,226,'Москва Курская','T'],[2,1438,1082,130,'Авиамотo'],
  [3,1048,112,170,'Смоленская','r'],[3,652,262,132,'Киевская','r'],[3,576,356,236,'Киевский вокзал','t'],[3,145,598,190,'Студенческая','r'],[3,1338,788,204,'Парк культуры','r'],
  [3,1004,1250,178,'Фрунзенская','r'],[3,330,1256,198,'Новодевичий'],[3,1543,56,265,'Государственный'],
  [4,132,102,110,'музей...'],[4,42,206,212,'Кропоткинская','r'],[4,740,166,94,'TSET','',12,'#8c8c8c'],[4,984,182,166,'Болотный о.','',13,'#555'],
  [4,682,396,212,'Новокузнецкая','r'],[4,590,492,206,'Третьяковская','r'],[4,1330,446,138,'Таганская','r'],[4,496,714,118,'Полянка','r'],
  [4,206,858,214,'Парк искусств'],[4,250,902,126,'МУЗЕОН'],[4,164,1032,300,'Станция Октябрьская','r'],[4,238,1144,180,'Октябрьская','r'],
  [4,880,1120,270,'Павелецкий вокзал','t'],[4,746,1164,206,'Добрынинская','l'],[4,580,1218,194,'Серпуховская','r'],
  [5,514,56,186,'Серп и Молот','t'],[5,438,118,240,'Площадь Ильича','r'],[5,350,176,236,'Отель "Кристал"','',13.5],[5,748,164,118,'Римская','l'],[5,632,232,242,'Москва Товарная','t'],
  [5,66,468,198,'Марксистская','l'],[5,16,922,310,'Крестьянская застава','r'],[5,38,1028,194,'Пролетарская','r'],[5,634,872,246,'Калитниковское'],[5,732,916,148,'кладбище'],[5,1084,878,146,'Калитники','t']
];
const metro = (x, y) => `<g transform="translate(${x} ${y})"><circle r="3.5" fill="#eee" stroke="#6f6f6f" stroke-width="1.2"/><path d="M-1.5 1.5V-1.5L0 .5 1.5-1.5V1.5" fill="none" stroke="#6f6f6f" stroke-width=".9"/></g>`;
const train = (x, y) => `<g transform="translate(${x} ${y})" fill="none" stroke="#858585"><rect x="-4" y="-4.5" width="8.5" height="9"/><path d="M-2-1.5h1M1.5-1.5h1M-2 2.5h4.5" /></g>`;
for (const [s, x, y, w, name, side = '', size = 13, col = '#6c6c6c'] of PLACES) {
  const X = px(s, x), Y = py(s, y), W = w * SX, bold = size === 15.5;
  out += `<text x="${X}" y="${Y}" font-size="${size}" fill="${col}" ${bold ? 'font-weight="500"' : ''} stroke="#f0f0f0" stroke-width="1.6" paint-order="stroke" textLength="${W}" ${bold || size === 26 || name === 'TSET' ? '' : 'lengthAdjust="spacingAndGlyphs"'}>${name}</text>`;
  if (side === 'r') out += metro(X + W + 4.6, Y - 4.2);
  if (side === 'l') out += metro(X - 4.6, Y - 4.2);
  if (side === 't') out += train(X + W + 7, Y - 4.2);
  if (side === 'T') out += train(X - 6.5, Y - 4.2);
}
[[1,306,1066],[1,361,1043],[1,404,1112]].forEach(([s, x, y]) => out += metro(px(s, x), py(s, y)));

// Pins: sheet, centre x, tip y, glyph
const TREE = '<path d="M-.5-20 2.5-13H0v1h5v2H-5v-2h2V-14h-.5z" fill="#eee"/>';
const HOUSE = '<path d="M-5-17.500 0-20l5 2.500zM-4-16.500h8v6h-8zM-1.500-15v3M1.500-15v3" fill="none" stroke="#eee" stroke-width="1.100"/>';
const PINS = [
  [0,416,158,TREE],[0,974,760,HOUSE],[0,272,1070,'<path d="M-4-10v-6h8v6zM-2-16v-2h4v2M0-14v3" fill="none" stroke="#eee" stroke-width="1.3"/>'],[0,166,840,'<path d="M-3-19v8M3-19v8M-3-15h6" stroke="#eee" stroke-width="2"/>','#a0a0a0'],
  [1,508,200,HOUSE],[1,692,345,'<circle cy="-15.5" r="3.2" fill="#f4f4f4"/>'],[1,624,596,'<circle cx="-2" cy="-14" r="2.5" fill="#eee"/><circle cx="3" cy="-16" r="2.5" fill="#eee"/>','#a0a0a0'],
  [1,594,1060,'<path d="M-4-20h8L2-15l2 5h-8l2-5z" fill="#eee"/>','#a0a0a0'],[1,742,1030,'<path d="M0-20v10M-3-17h6" stroke="#eee" stroke-width="1.3"/>','#a0a0a0'],
  [2,1414,212,TREE],[2,1307,798,'<path d="M-6-16l6-2.500 6 2.500-6 2.500zM-3-13.500v3h6v-3" fill="#eee"/>'],
  [4,270,102,HOUSE],[5,909,915,TREE],[3,558,1304,TREE]
];
for (const [s, x, y, glyph, col = '#858585'] of PINS)
  out += `<g transform="translate(${px(s, x)} ${py(s, y)})"><path d="M0 0C-1.500-5-8.500-9-8.500-15.500a8.500 8.500 0 0 1 17 0C8.500-9 1.500-5 0 0z" fill="${col}"/>${glyph}</g>`;
out += `<g transform="translate(${px(5, 303)} ${py(5, 142)})"><rect width="17" height="17" fill="#a4a4a4"/><path d="M2.500 4v9M2.500 11h12v2M6 7.500h8.500V11" fill="none" stroke="#eee" stroke-width="1.700"/></g>`;
out += `<path transform="translate(${px(1, 654)} ${py(1, 1064)})" fill="#9c8f72" fill-rule="evenodd" d="M0 0C-3-9-18-20-18-32a18 18 0 0 1 36 0C18-20 3-9 0 0zM-.5-41a7.200 8.500 0 1 0 0 17 7.200 8.500 0 1 0 0-17z"/>`;
document.getElementById('map').innerHTML = out;
</script>
</body>
</html>
